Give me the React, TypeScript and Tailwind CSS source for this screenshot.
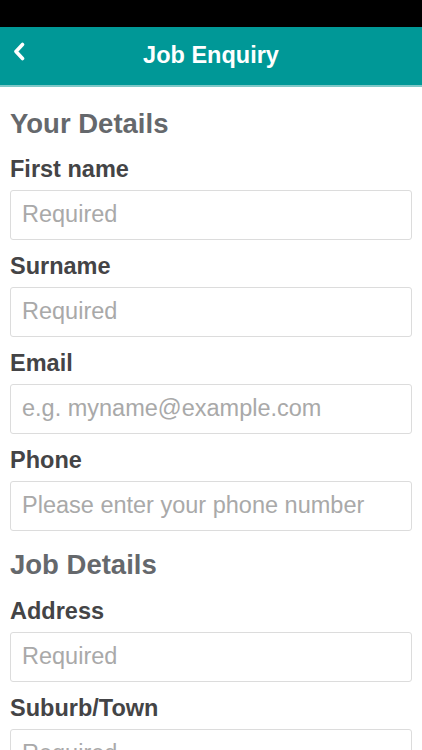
import React from "react";

const font = { fontFamily: '"Liberation Sans", Arial, Helvetica, sans-serif' };

function Field({ label, placeholder }: { label: string; placeholder: string }) {
  return (
    <div className="flex flex-col">
      <div className="h-[30px] flex items-center text-[23.5px] font-bold text-[#444446] leading-none">{label}</div>
      <div className="mt-[5px] h-[50px] rounded-[3px] border border-[#dcdcdc] bg-white flex items-center px-[11px]">
        <input
          className="w-full bg-transparent outline-none text-[23.5px] text-[#333] placeholder:text-[#a9a9a9]"
          style={font}
          placeholder={placeholder}
        />
      </div>
    </div>
  );
}

export default function App() {
  return (
    <div className="w-[422px] h-[750px] overflow-hidden bg-white" style={font}>
      <div className="h-[27px] bg-black" />
      <div className="h-[58px] bg-[#009897] relative flex items-center justify-center">
        <svg className="absolute left-[12px] top-[15px]" width="15" height="19" viewBox="0 0 15 19">
          <path d="M10.5 2.5 L4 9.5 L10.5 16.5" stroke="white" strokeWidth="3.6" fill="none" strokeLinecap="round" strokeLinejoin="round" />
        </svg>
        <div className="text-white text-[23.5px] font-bold">Job Enquiry</div>
      </div>
      <div className="h-[2px] bg-[#7fc8c7]" />
      <div className="px-[10px]">
        <div className="h-[40px] mt-[17px] mb-[11px] flex items-center text-[27.5px] font-bold text-[#65686c]">Your Details</div>
        <div className="flex flex-col gap-[12px]">
          <Field label="First name" placeholder="Required" />
          <Field label="Surname" placeholder="Required" />
          <Field label="Email" placeholder="e.g. myname@example.com" />
          <Field label="Phone" placeholder="Please enter your phone number" />
        </div>
        <div className="h-[40px] mt-[14px] mb-[12px] flex items-center text-[27.5px] font-bold text-[#65686c]">Job Details</div>
        <div className="flex flex-col gap-[12px]">
          <Field label="Address" placeholder="Required" />
          <Field label="Suburb/Town" placeholder="Required" />
        </div>
      </div>
    </div>
  );
}
